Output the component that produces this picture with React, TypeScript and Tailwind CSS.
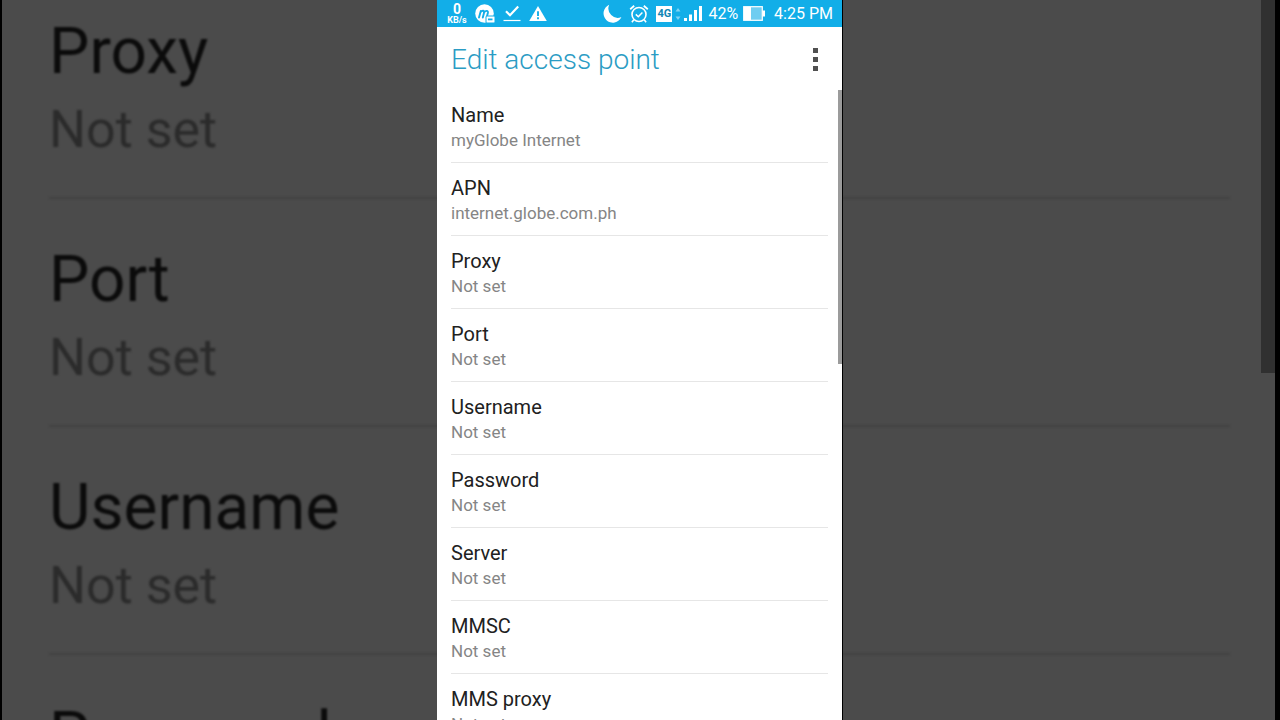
type Setting = {
  label: string;
  value: string;
};

const settings: Setting[] = [
  { label: "Name", value: "myGlobe Internet" },
  { label: "APN", value: "internet.globe.com.ph" },
  { label: "Proxy", value: "Not set" },
  { label: "Port", value: "Not set" },
  { label: "Username", value: "Not set" },
  { label: "Password", value: "Not set" },
  { label: "Server", value: "Not set" },
  { label: "MMSC", value: "Not set" },
  { label: "MMS proxy", value: "Not set" },
];

// Rows shown enlarged behind the phone
const backdropRows = settings.slice(2, 6);

function MessengerIcon() {
  return (
    <svg width="20" height="20" viewBox="0 0 20 20" className="shrink-0">
      <circle cx="9.5" cy="9.5" r="9.3" fill="#fff" />
      <path
        d="M4 13.5 L5.8 7 M5.5 8.2 C7 6.2 9.6 6.2 9.1 8.6 L7.8 13.5 M9.1 8.4 C10.8 6.2 13.4 6.4 12.9 8.8 L11.8 13"
        fill="none"
        stroke="#12aee8"
        strokeWidth="1.9"
        strokeLinecap="round"
      />
      <rect x="11" y="12" width="9" height="7" rx="1" fill="#fff" stroke="#12aee8" />
      <rect x="13" y="14.5" width="4.5" height="1.8" fill="#12aee8" />
    </svg>
  );
}

function DoneIcon() {
  return (
    <svg width="18" height="18" viewBox="0 0 18 18" fill="none" stroke="#fff" className="shrink-0">
      <path d="M3 6.2 L7 10.2 L15.2 1.5" strokeWidth="2.2" />
      <path d="M0.5 15.5 H17.5" strokeWidth="1.2" />
    </svg>
  );
}

function WarningIcon() {
  return (
    <svg width="18" height="18" viewBox="0 0 18 18" className="shrink-0">
      <path d="M9 1 L17.8 16 H0.2 Z" fill="#fff" />
      <path d="M9 6.3 V10.9 M9 12.3 V14.3" stroke="#12aee8" strokeWidth="1.9" />
    </svg>
  );
}

function MoonIcon() {
  return (
    <svg width="19" height="19" viewBox="0 0 19 19" className="shrink-0">
      <path d="M6.2 0.8 A9.3 9.3 0 1 0 18.4 13 A9.3 9.3 0 0 1 6.2 0.8 Z" fill="#fff" />
    </svg>
  );
}

function AlarmIcon() {
  return (
    <svg width="20" height="20" viewBox="0 0 20 20" fill="none" stroke="#fff" className="shrink-0">
      <circle cx="10" cy="10.5" r="7" strokeWidth="1.6" />
      <path d="M6.8 10.4 L9.3 12.8 L13.4 8.4" strokeWidth="1.5" />
      <path d="M1.2 5.2 L5.2 1.8 M18.8 5.2 L14.8 1.8" strokeWidth="1.8" />
      <path d="M4.8 15.8 L2.9 18.2 M15.2 15.8 L17.1 18.2" strokeWidth="1.6" />
    </svg>
  );
}

function DataArrows() {
  return (
    <svg width="6" height="14" viewBox="0 0 6 14" fill="#7fd3f3" className="shrink-0">
      <path d="M3 1 L5.5 4.5 H0.5 Z" />
      <path d="M3 13 L0.5 9.5 H5.5 Z" />
    </svg>
  );
}

function SignalIcon() {
  return (
    <svg width="19" height="17" viewBox="0 0 19 17" fill="#fff" className="shrink-0">
      <rect x="0" y="13" width="3" height="3" />
      <rect x="5" y="9.5" width="3" height="6.5" />
      <rect x="10" y="5" width="3" height="11" />
      <rect x="15" y="1" width="3" height="15" />
    </svg>
  );
}

function BatteryIcon() {
  return (
    <svg width="23" height="16" viewBox="0 0 23 16" className="shrink-0">
      <rect x="0.7" y="0.7" width="18.6" height="13.6" fill="#6fcdf1" stroke="#fff" strokeWidth="1.2" />
      <rect x="1" y="1" width="7" height="13" fill="#fff" />
      <rect x="19.5" y="4.5" width="2.5" height="6" fill="#fff" />
    </svg>
  );
}

function StatusBar() {
  return (
    <div className="flex h-[27px] shrink-0 items-center justify-between bg-[#12aee8] pr-[9px] pl-2.5 text-white">
      <div className="flex items-center gap-2">
        <div className="flex w-5 flex-col items-center font-bold">
          <span className="text-sm leading-[13px]">0</span>
          <span className="text-[9px] leading-[9px]">KB/s</span>
        </div>
        <MessengerIcon />
        <DoneIcon />
        <WarningIcon />
      </div>
      <div className="flex items-center">
        <div className="mr-[3px] flex items-center gap-[7px]">
          <MoonIcon />
          <AlarmIcon />
          <span className="flex h-4 w-4 items-center justify-center bg-white text-[11px] leading-4 font-bold text-[#1286b4]">
            4G
          </span>
        </div>
        <DataArrows />
        <div className="ml-[3px] flex items-center gap-[5px]">
          <SignalIcon />
          <span className="text-base leading-5">42%</span>
          <BatteryIcon />
        </div>
        <span className="ml-2 text-base leading-5 whitespace-nowrap">4:25 PM</span>
      </div>
    </div>
  );
}

function Backdrop() {
  return (
    <div
      aria-hidden="true"
      className="absolute inset-0 overflow-hidden border-r-[5px] border-l-2 border-black bg-[#4b4b4b]"
    >
      <div className="-mt-[29px] mr-[45px] ml-[47px] blur-[1px]">
        {backdropRows.map((row) => (
          <div key={row.label} className="h-[228px] border-b-2 border-[#424242] pt-[43px]">
            <p className="text-[64px] leading-[76px] text-[#0b0b0b]">{row.label}</p>
            <p className="text-[52px] leading-[80px] text-[#2b2b2b]">{row.value}</p>
          </div>
        ))}
      </div>
      <div className="absolute top-0 right-0 h-[373px] w-3.5 bg-[#303030]" />
    </div>
  );
}

export default function App() {
  return (
    <div className="relative flex h-screen justify-center overflow-hidden font-[Roboto,sans-serif]">
      <Backdrop />

      <main className="relative flex w-full max-w-[406px] flex-col overflow-hidden border-r border-black bg-white">
        <StatusBar />

        <header className="flex h-[63px] shrink-0 items-center justify-between pt-0.5 pr-[19px] pl-3.5">
          <h1 className="text-[28px] leading-9 font-light text-[#2b9cc4]">Edit access point</h1>
          <button type="button" aria-label="More options" className="flex w-4 flex-col items-center gap-1">
            <span className="h-[5px] w-[5px] bg-[#505050]" />
            <span className="h-[5px] w-[5px] bg-[#505050]" />
            <span className="h-[5px] w-[5px] bg-[#505050]" />
          </button>
        </header>

        <div className="relative min-h-0 flex-1 overflow-hidden">
          <ul className="px-3.5">
            {settings.map((item) => (
              <li key={item.label} className="border-b border-[#e6e6e6]">
                <button type="button" className="block w-full pt-[13px] pb-2 text-left">
                  <span className="block text-xl leading-6 text-[#212121]">{item.label}</span>
                  <span className="block text-[17px] leading-[27px] text-[#858585]">{item.value}</span>
                </button>
              </li>
            ))}
          </ul>
          {/* scroll thumb */}
          <div className="absolute top-0 right-0 h-[274px] w-1 bg-[#9b9b9b]" />
        </div>
      </main>
    </div>
  );
}
